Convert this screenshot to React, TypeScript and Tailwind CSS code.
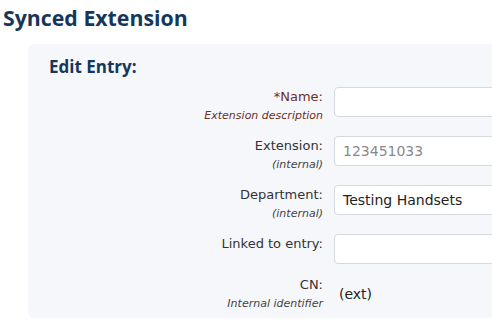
export default function App() {
  const rows = [
    { label: "*Name:", sub: "Extension description", value: "", required: true },
    { label: "Extension:", sub: "(internal)", value: "123451033", placeholder: true },
    { label: "Department:", sub: "(internal)", value: "Testing Handsets" },
    { label: "Linked to entry:", sub: "", value: "" },
  ];

  return (
    <div className="w-[492px] h-[322px] overflow-hidden bg-white" style={{ fontFamily: '"DejaVu Sans", Verdana, sans-serif' }}>
      <h1
        className="pl-[3px] pt-[3px] text-[21.3px] leading-[30px] font-bold text-[#16375c]"
        style={{ fontFamily: '"Open Sans", sans-serif' }}
      >
        Synced Extension
      </h1>
      <div className="ml-[28px] mt-[11px] w-[520px] rounded-md bg-[#f5f7fb] pl-[21px] pt-[11px] pb-[5px]">
        <h2
          className="text-[17px] leading-[24px] font-bold text-[#16375c] mb-[8px]"
          style={{ fontFamily: '"Open Sans", sans-serif' }}
        >
          Edit Entry:
        </h2>
        <div className="grid grid-cols-[274px_1fr] gap-x-[11px] gap-y-[11px]">
          {rows.map((r) => (
            <div key={r.label} className="contents">
              <div className="flex flex-col items-end">
                <span className={`text-[13px] leading-[20px] ${r.required ? "text-[#6e2f1c]" : "text-[#333]"}`}>{r.label}</span>
                {r.sub && (
                  <span className={`text-[11px] leading-[18px] italic ${r.required ? "text-[#6e2f1c]" : "text-[#444]"}`}>{r.sub}</span>
                )}
              </div>
              <div>
                <div
                  className={`h-[30px] rounded-[4px] border border-[#d6d9de] bg-white px-[8px] flex items-center text-[14px] ${r.placeholder ? "text-[#888]" : "text-[#222]"}`}
                >
                  {r.value}
                </div>
              </div>
            </div>
          ))}
          <div className="flex flex-col items-end">
            <span className="text-[13px] leading-[20px] text-[#333]">CN:</span>
            <span className="text-[11px] leading-[18px] italic text-[#444]">Internal identifier</span>
          </div>
          <div className="flex items-center pl-[5px] text-[14px] text-[#222]">(ext)</div>
        </div>
      </div>
    </div>
  );
}
